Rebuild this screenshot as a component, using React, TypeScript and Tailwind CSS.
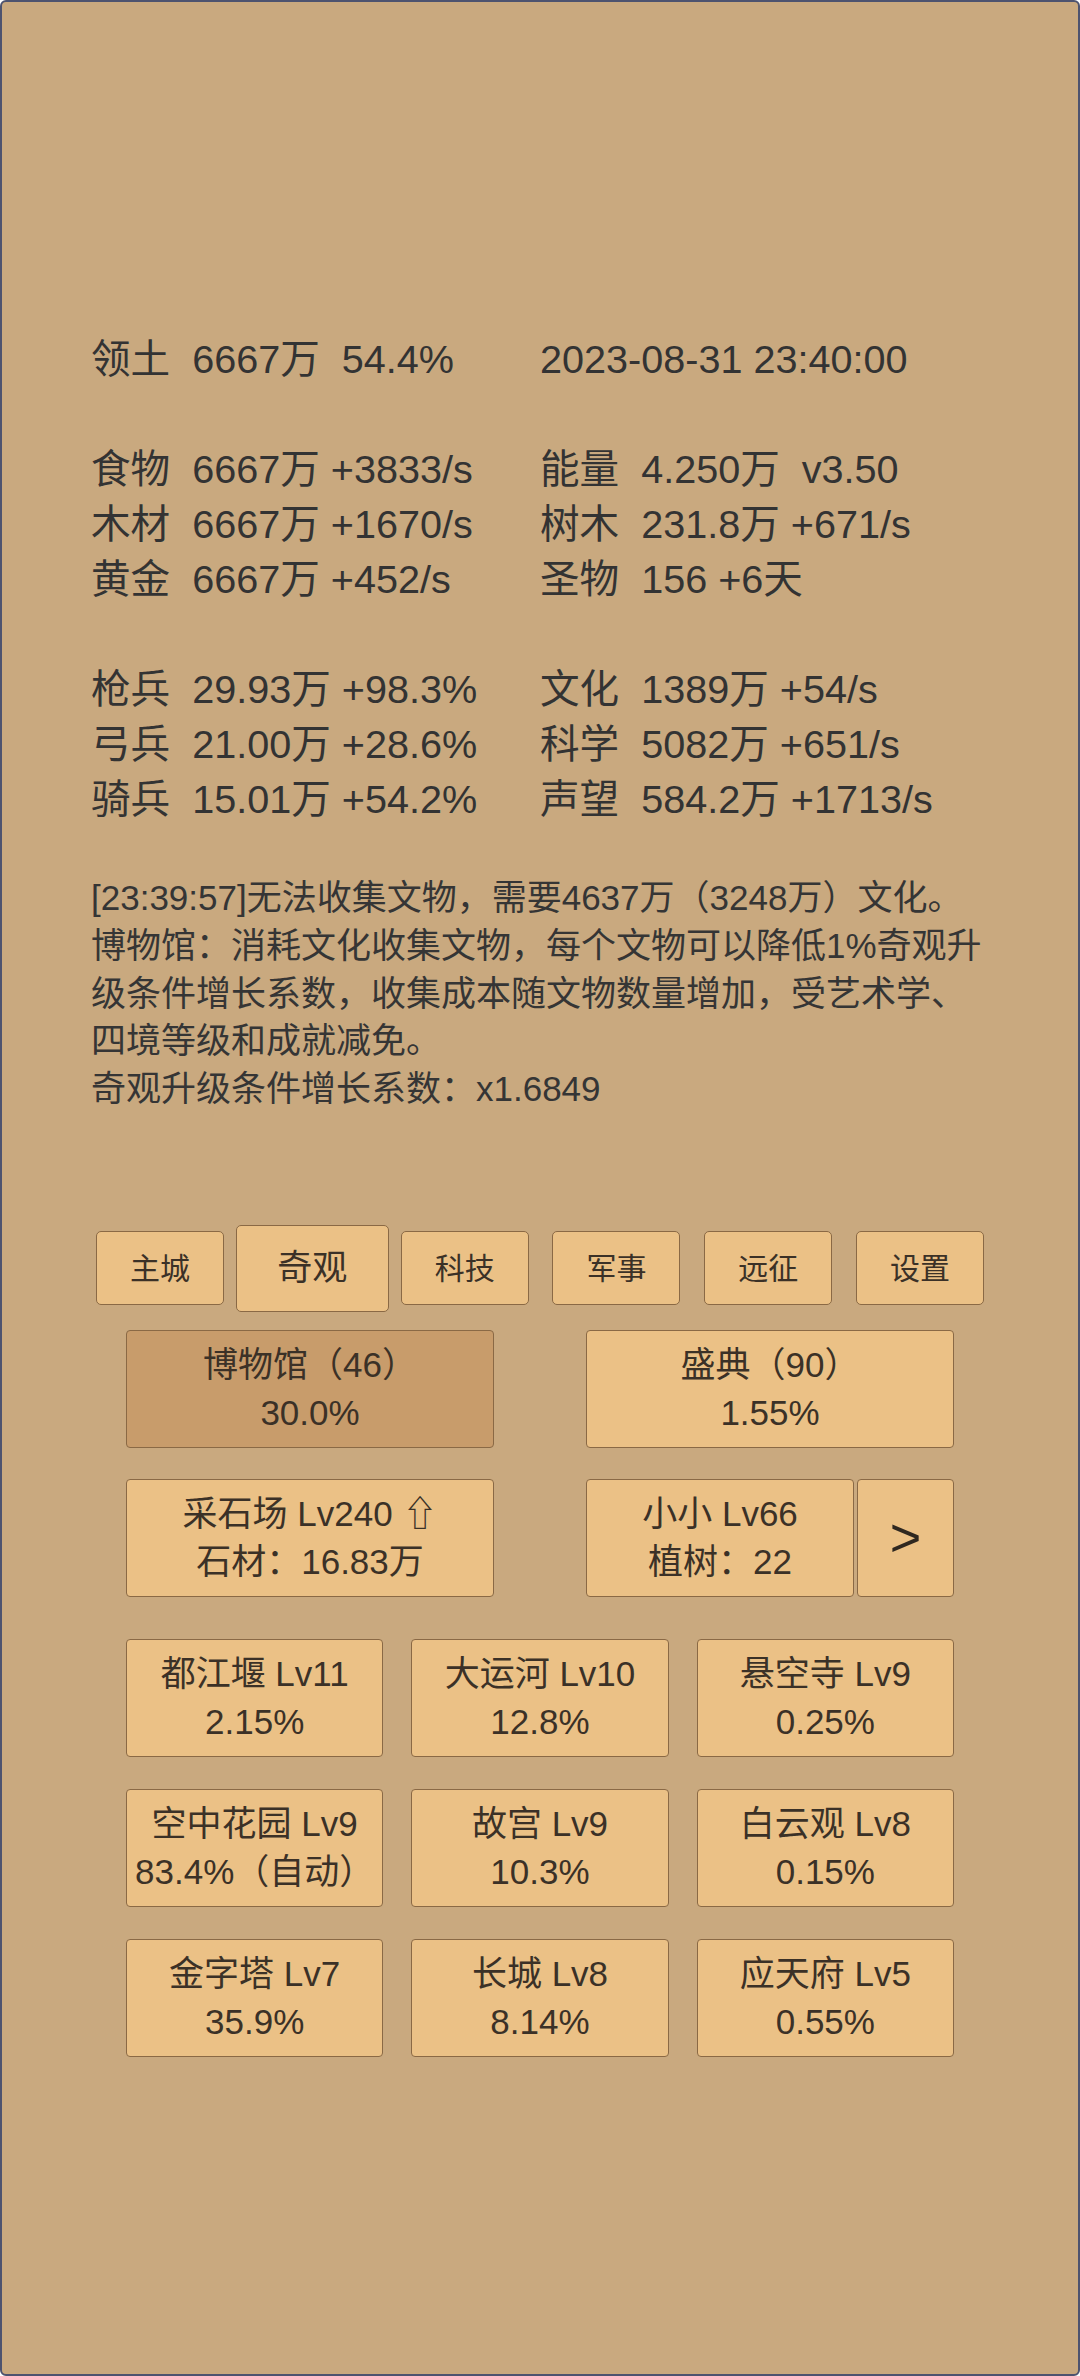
import React from "react";

const FONT = { fontFamily: '"Liberation Sans", "Noto Sans CJK SC", "DejaVu Sans", sans-serif' };

const statsLeft = [
  "领土  6667万  54.4%",
  "",
  "食物  6667万 +3833/s",
  "木材  6667万 +1670/s",
  "黄金  6667万 +452/s",
  "",
  "枪兵  29.93万 +98.3%",
  "弓兵  21.00万 +28.6%",
  "骑兵  15.01万 +54.2%",
];
const statsRight = [
  "2023-08-31 23:40:00",
  "",
  "能量  4.250万  v3.50",
  "树木  231.8万 +671/s",
  "圣物  156 +6天",
  "",
  "文化  1389万 +54/s",
  "科学  5082万 +651/s",
  "声望  584.2万 +1713/s",
];

const tabs = ["主城", "奇观", "科技", "军事", "远征", "设置"];

const wonders: [string, string][] = [
  ["都江堰 Lv11", "2.15%"],
  ["大运河 Lv10", "12.8%"],
  ["悬空寺 Lv9", "0.25%"],
  ["空中花园 Lv9", "83.4%（自动）"],
  ["故宫 Lv9", "10.3%"],
  ["白云观 Lv8", "0.15%"],
  ["金字塔 Lv7", "35.9%"],
  ["长城 Lv8", "8.14%"],
  ["应天府 Lv5", "0.55%"],
];

function Panel({ a, b, dark, className = "" }: { a: string; b: string; dark?: boolean; className?: string }) {
  return (
    <div
      className={
        "h-[118px] flex flex-col items-center justify-center rounded-[4px] border-[1.5px] border-[#8a6945] text-[35px] leading-[48px] text-[#3b3127] whitespace-nowrap " +
        (dark ? "bg-[#c89c6b] " : "bg-[#ebc186] ") +
        className
      }
    >
      <div>{a}</div>
      <div>{b}</div>
    </div>
  );
}

export default function App() {
  return (
    <div
      style={FONT}
      className="w-[1080px] h-[2376px] bg-[#c9a97f] border-2 border-[#4d536f] rounded-[6px] overflow-hidden"
    >
      <div className="px-[89px] pt-[330px] grid grid-cols-2 text-[39.6px] leading-[55px] text-[#333333]">
        <div>
          {statsLeft.map((s, i) => (
            <div key={i} className="whitespace-pre h-[55px]">{s}</div>
          ))}
        </div>
        <div>
          {statsRight.map((s, i) => (
            <div key={i} className="whitespace-pre h-[55px]">{s}</div>
          ))}
        </div>
      </div>

      <div className="px-[89px] mt-[47px] text-[35px] leading-[47.8px] text-[#353535]">
        <div>[23:39:57]无法收集文物，需要4637万（3248万）文化。</div>
        <div>博物馆：消耗文化收集文物，每个文物可以降低1%奇观升级条件增长系数，收集成本随文物数量增加，受艺术学、四境等级和成就减免。</div>
        <div>奇观升级条件增长系数：x1.6849</div>
      </div>

      <div className="px-[82px] mt-[112px] flex items-center h-[87px]">
        {tabs.map((t) => {
          const sel = t === "奇观";
          return (
            <div key={t} className="flex-1 flex justify-center">
              <div
                className={
                  "flex items-center justify-center bg-[#ebc186] border-[1.5px] border-[#8a6945] rounded-[5px] text-[#3b3127] " +
                  (sel ? "w-[153px] h-[87px] text-[35px]" : "w-[128px] h-[74px] text-[30px]")
                }
              >
                {t}
              </div>
            </div>
          );
        })}
      </div>

      <div className="mx-[124px] mt-[18px]">
        <div className="grid grid-cols-2 gap-x-[92px]">
          <Panel a="博物馆（46）" b="30.0%" dark />
          <Panel a="盛典（90）" b="1.55%" />
        </div>
        <div className="grid grid-cols-2 gap-x-[92px] mt-[31px]">
          <Panel a="采石场 Lv240 ⇧" b="石材：16.83万" />
          <div className="flex gap-[3px]">
            <Panel a="小小 Lv66" b="植树：22" className="flex-1" />
            <div className="w-[97px] h-[118px] flex items-center justify-center rounded-[4px] border-[1.5px] border-[#8a6945] bg-[#ebc186] text-[54px] text-[#2f2820]">
              &gt;
            </div>
          </div>
        </div>
        <div className="grid grid-cols-3 gap-x-[28px] gap-y-[32px] mt-[42px]">
          {wonders.map(([a, b]) => (
            <Panel key={a} a={a} b={b} />
          ))}
        </div>
      </div>
    </div>
  );
}
